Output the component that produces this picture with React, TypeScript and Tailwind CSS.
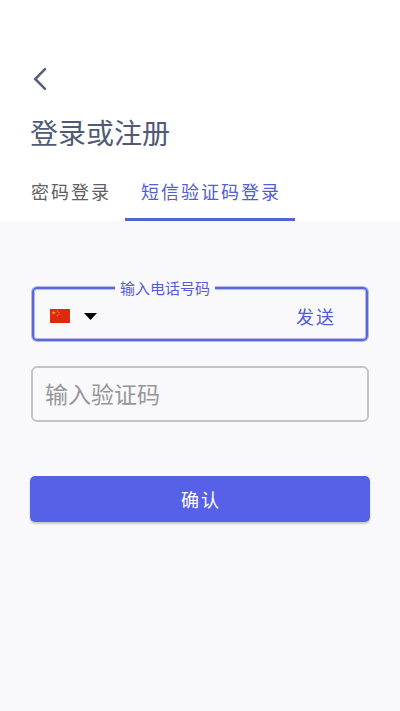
export default function App() {
  return (
    <main className="h-[711px] w-[400px] overflow-hidden bg-[#f9f9fc] font-['Noto_Sans_CJK_SC',sans-serif]">
      <header className="h-[221px] bg-white pt-[67px]">
        <button aria-label="返回" className="ml-[32px] block h-6 w-4">
          <svg width="16" height="24" viewBox="0 0 16 24" fill="none" stroke="#555f7a" strokeWidth="2.5" strokeLinecap="round" strokeLinejoin="miter"><path d="M13 2.200 3.200 12l9.800 9.800" /></svg>
        </button>
        <h1 className="ml-[30px] mt-[21px] h-[40px] text-[28px] leading-[40px] text-[#505a76]">登录或注册</h1>
        <nav className="mt-[11px] flex h-[58px] items-start text-[18px] leading-[56px] tracking-[2px]">
          <button className="w-[110px] whitespace-nowrap pl-[31px] text-left text-[#606060]">密码登录</button>
          <button className="ml-[15px] h-[58px] w-[170px] whitespace-nowrap border-b-[3px] border-[#5661d4] pl-[16px] text-left text-[#525dd6]">短信验证码登录</button>
        </nav>
      </header>
      <section className="px-[30px] pt-[66px]">
        <div className="relative mx-[2px] flex h-[54px] items-center rounded-[5px] border-2 border-[#5c65d8] pl-[16px] pt-[4px] shadow-[0_0_0_1px_#b4b9f2,inset_0_0_0_1px_#b4b9f2]">
          <label className="absolute -top-[11px] left-[81px] bg-[#f9f9fc] px-[5px] text-[15px] leading-[20px] text-[#525dd6]">输入电话号码</label>
          <svg width="20" height="14" viewBox="0 0 30 21"><path fill="#de2910" d="M0 0h30v21H0z" /><g fill="#ffb51f"><path d="m5.500 2.500.8 2.100h2.200l-1.800 1.400.7 2.200-1.900-1.300-1.900 1.300.7-2.200-1.800-1.400h2.200z" /><circle cx="11" cy="3" r=".8" /><circle cx="13.500" cy="5" r=".8" /><circle cx="13.500" cy="8" r=".8" /><circle cx="11" cy="10" r=".8" /></g></svg>
          <svg className="ml-[14px]" width="13" height="7" viewBox="0 0 13 7"><path d="M0 0h13L6.500 7z" /></svg>
          <button className="ml-auto mr-[30px] text-[18px] tracking-[2px] text-[#525dd6]">发送</button>
        </div>
        <div className="mx-px mt-[25px] flex h-[56px] items-center rounded-[6px] border-2 border-[#c4c4c6] pb-px pl-[12px] text-[23px] text-[#969698]">输入验证码</div>
        <button className="mt-[54px] h-[46px] w-full rounded-[5px] bg-[#5661e7] pl-[2px] text-[18px] tracking-[2px] text-white shadow-[0_2px_2px_rgba(0,0,0,0.2)]">确认</button>
      </section>
    </main>
  );
}
